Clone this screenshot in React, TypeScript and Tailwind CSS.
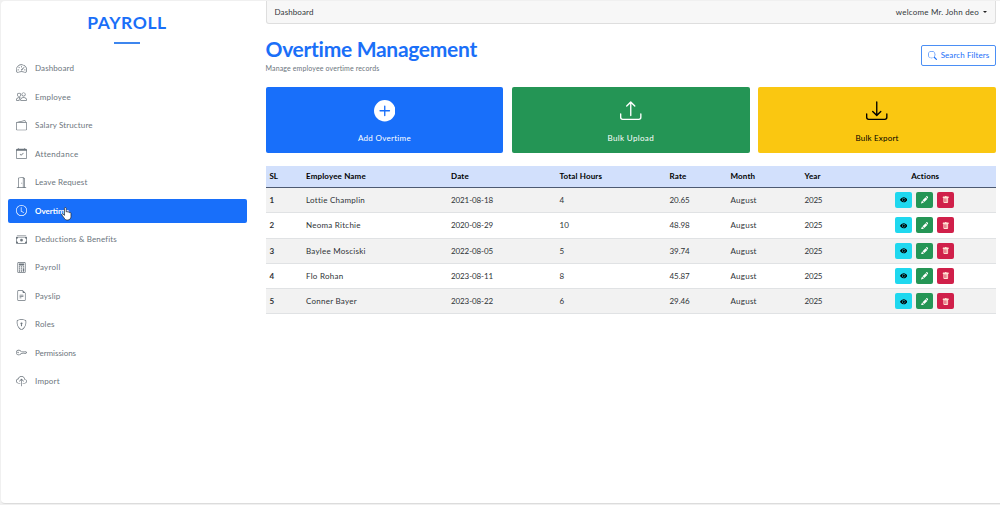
import React, { useState } from "react";
import {
  BsCalculator,
  BsCalendarCheck,
  BsCashStack,
  BsClock,
  BsCloudUpload,
  BsDoorOpen,
  BsDownload,
  BsEyeFill,
  BsFileEarmarkText,
  BsKey,
  BsPencilFill,
  BsPeople,
  BsPlusCircleFill,
  BsSearch,
  BsShieldLock,
  BsSpeedometer2,
  BsTrashFill,
  BsUpload,
  BsWallet2,
} from "react-icons/bs";

const menus = [
  { title: "Dashboard", icon: <BsSpeedometer2 />, track: "tracking-[0.1px]" },
  { title: "Employee", icon: <BsPeople />, track: "tracking-[0.2px]" },
  { title: "Salary Structure", icon: <BsWallet2 />, track: "tracking-[0.13px]" },
  { title: "Attendance", icon: <BsCalendarCheck />, track: "tracking-[0.3px]" },
  { title: "Leave Request", icon: <BsDoorOpen />, track: "tracking-[0.13px]" },
  { title: "Overtime", icon: <BsClock />, track: "tracking-[0px]" },
  { title: "Deductions & Benefits", icon: <BsCashStack />, track: "tracking-[0.13px]" },
  { title: "Payroll", icon: <BsCalculator />, track: "tracking-[0.28px]" },
  { title: "Payslip", icon: <BsFileEarmarkText />, track: "tracking-[0.15px]" },
  { title: "Roles", icon: <BsShieldLock />, track: "tracking-[0.15px]" },
  { title: "Permissions", icon: <BsKey />, track: "tracking-[-0.05px]" },
  { title: "Import", icon: <BsCloudUpload />, track: "tracking-[0.2px]" },
];

const records = [
  { id: 1, name: "Lottie Champlin", date: "2021-08-18", hours: 4, rate: "20.65" },
  { id: 2, name: "Neoma Ritchie", date: "2020-08-29", hours: 10, rate: "48.98" },
  { id: 3, name: "Baylee Mosciski", date: "2022-08-05", hours: 5, rate: "39.74" },
  { id: 4, name: "Flo Rohan", date: "2023-08-11", hours: 8, rate: "45.87" },
  { id: 5, name: "Conner Bayer", date: "2023-08-22", hours: 6, rate: "29.46" },
];

const Pointer = () => (
  <svg viewBox="0 0 16 20" className="absolute left-[53px] top-[8.5px] h-[14px] w-[11px]">
    <path
      d="M5 1.8c0-1.6 2.6-1.6 2.6 0v5.4c.3-1 2.4-.9 2.5.3.5-.8 2.3-.6 2.4.6.6-.6 2-.3 2 1v4.4c0 3-1.7 5.3-5 5.3-2.7 0-4-1.2-5-3L1.3 11.5c-.8-1.4.9-2.5 2-1.3L5 12z"
      fill="#fff"
      stroke="#222"
      strokeWidth="1"
    />
  </svg>
);

const Sidebar = () => {
  const [active, setActive] = useState<string>("Overtime");
  return (
    <aside className="flex w-[253.5px] shrink-0 flex-col pl-[6.5px] pr-2">
      <div className="flex flex-col items-center pt-[11px]">
        <h1 className="text-[17.5px] font-bold leading-[22px] tracking-[0.55px] text-[#1a6ff8]">PAYROLL</h1>
        <div className="mt-[8px] h-[2px] w-[26px] bg-[#3d86ee]" />
      </div>
      <nav className="mt-[12.4px] flex flex-col gap-[4.45px]">
        {menus.map((menu) => (
          <a
            key={menu.title}
            href="#"
            onClick={() => setActive(menu.title)}
            className={
              menu.title === active
                ? "relative flex h-6 items-center rounded-[2px] bg-[#186ffa] pl-2 text-[8px] font-bold text-white"
                : "relative flex h-6 items-center rounded-[2px] pl-2 text-[8px] text-[#6c757d]"
            }
          >
            <span className="flex w-[19.5px] text-[11px]">{menu.icon}</span>
            <span className={menu.track}>{menu.title}</span>
            {menu.title === active && <Pointer />}
          </a>
        ))}
      </nav>
    </aside>
  );
};

const Actions = () => (
  <div className="flex justify-center gap-1 pr-[2px] text-[7.5px]">
    <button className="flex h-4 w-[17px] items-center justify-center rounded-[2px] bg-[#1fd8ef] text-black">
      <BsEyeFill />
    </button>
    <button className="flex h-4 w-[17px] items-center justify-center rounded-[2px] bg-[#249555] text-white">
      <BsPencilFill />
    </button>
    <button className="flex h-4 w-[17px] items-center justify-center rounded-[2px] bg-[#d0204a] text-[#ffe3d3]">
      <BsTrashFill />
    </button>
  </div>
);

const OvertimeTable = () => (
  <table className="mt-[13px] w-full table-fixed border-collapse text-left text-[8px] tracking-[0.15px] text-[#2f3337]">
    <colgroup>
      <col className="w-[36.5px]" />
      <col className="w-[145px]" />
      <col className="w-[108.5px]" />
      <col className="w-[110px]" />
      <col className="w-[61px]" />
      <col className="w-[74px]" />
      <col className="w-[54px]" />
      <col />
    </colgroup>
    <thead>
      <tr className="h-[21.5px] border-b border-[#4d5a72] bg-[#d2e0fc] text-black">
        <th className="pb-[2px] pl-1 tracking-[-0.1px]">SL</th>
        <th className="pb-[2px] pl-1">Employee Name</th>
        <th className="pb-[2px] pl-1">Date</th>
        <th className="pb-[2px] pl-1">Total Hours</th>
        <th className="pb-[2px] pl-1">Rate</th>
        <th className="pb-[2px] pl-1">Month</th>
        <th className="pb-[2px] pl-1">Year</th>
        <th className="pb-[2px] text-center">Actions</th>
      </tr>
    </thead>
    <tbody>
      {records.map((row) => (
        <tr key={row.id} className="h-[25.3px] border-b border-[#e0e2e4] odd:bg-[#f2f2f2]">
          <th className="pl-1">{row.id}</th>
          <td className="pl-1 tracking-[0.25px]">{row.name}</td>
          <td className="pl-1 tracking-[-0.1px]">{row.date}</td>
          <td className="pl-1">{row.hours}</td>
          <td className="pl-1 tracking-[-0.05px]">{row.rate}</td>
          <td className="pl-1 tracking-[0.25px]">August</td>
          <td className="pl-1 tracking-[-0.2px]">2025</td>
          <td>
            <Actions />
          </td>
        </tr>
      ))}
    </tbody>
  </table>
);

export default function App() {
  return (
    <div className="h-[505px] w-[1000px] overflow-hidden bg-[#f0f0f0] pl-px pt-px font-[Lato,sans-serif]">
      <div className="flex h-[503px] w-[1002px] rounded-[4px] border-b border-[#dcdcdc] bg-white">
        <Sidebar />
        <main className="ml-[11px] flex w-[730.5px] shrink-0 flex-col">
          <header className="flex h-[22.5px] items-center justify-between rounded-b-[3px] border-x border-b border-[#dedede] bg-[#f7f7f7] px-2 text-[8px] tracking-[0.2px] text-[#33373b]">
            <span className="tracking-[0.1px]">Dashboard</span>
            <span className="flex items-center gap-1">
              welcome Mr. John deo
              <i className="border-x-[2.5px] border-t-[2.5px] border-x-transparent border-t-[#222]" />
            </span>
          </header>
          <div className="flex h-[63.5px] justify-between">
            <div className="pt-[12px]">
              <h2 className="text-[21px] font-bold leading-[26px] tracking-[-0.29px] text-[#1a6ff8]">
                Overtime Management
              </h2>
              <p className="mt-px text-[7px] leading-[10px] tracking-[0.13px] text-[#6c757d]">
                Manage employee overtime records
              </p>
            </div>
            <button className="mt-[21.5px] flex h-[20.5px] w-[75px] items-center justify-center gap-1 rounded-[2px] border border-[#4b8ff5] text-[8px] tracking-[0.1px] text-[#1a6ff8]">
              <BsSearch className="text-[9px]" />
              Search Filters
            </button>
          </div>
          <div className="grid grid-cols-3 gap-[8.4px] text-[8px] tracking-[0.2px]">
            <button className="flex h-[66px] flex-col items-center rounded-[2px] bg-[#186ffa] pt-[13px] text-white">
              <BsPlusCircleFill className="text-[21.5px]" />
              <span className="mt-[10px] tracking-[0.3px]">Add Overtime</span>
            </button>
            <button className="flex h-[66px] flex-col items-center rounded-[2px] bg-[#249555] pt-[13px] text-white">
              <BsUpload className="text-[21.5px]" />
              <span className="mt-[10px] tracking-[0.35px]">Bulk Upload</span>
            </button>
            <button className="flex h-[66px] flex-col items-center rounded-[2px] bg-[#fac711] pt-[13px] text-black">
              <BsDownload className="text-[21.5px]" />
              <span className="mt-[10px]">Bulk Export</span>
            </button>
          </div>
          <OvertimeTable />
        </main>
      </div>
    </div>
  );
}
